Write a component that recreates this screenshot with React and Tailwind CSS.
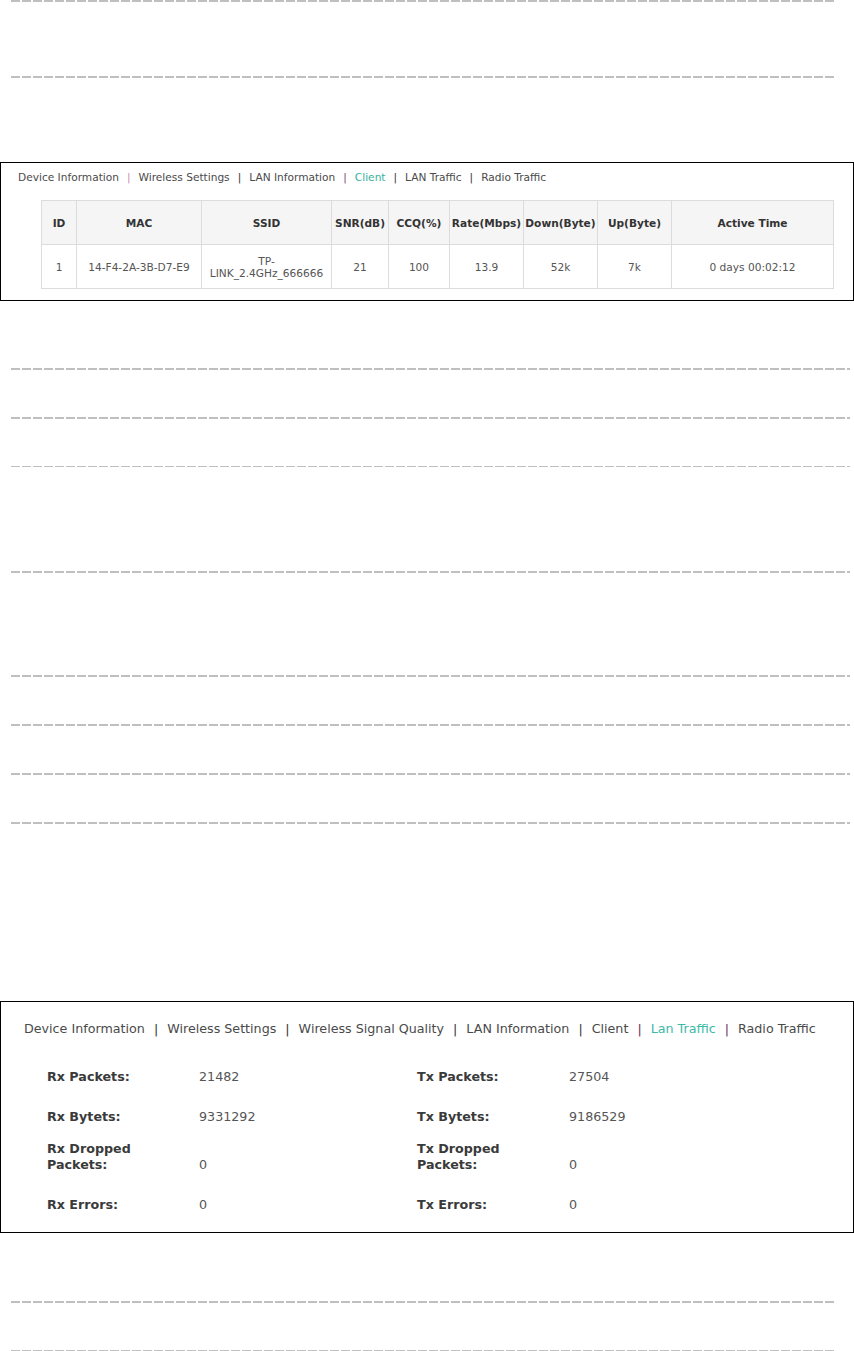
import React from 'react'

const dash = 'bg-[repeating-linear-gradient(90deg,#bfbfbf_0px,#bfbfbf_9px,transparent_9px,transparent_11px)]'

function Line({ mt, wide, thin }){
  return (
    <div
      className={
        dash + ' ml-[11px] ' +
        (wide ? 'w-[839px] ' : 'w-[823px] ') +
        (thin ? 'h-px ' : 'h-[2px] ') + mt
      }
    />
  )
}

const cols = [
  { h: 'ID', w: 'w-[35px]', v: '1' },
  { h: 'MAC', w: 'w-[125px]', v: '14-F4-2A-3B-D7-E9' },
  { h: 'SSID', w: 'w-[130px]', v: null },
  { h: 'SNR(dB)', w: 'w-[57px]', v: '21' },
  { h: 'CCQ(%)', w: 'w-[61px]', v: '100' },
  { h: 'Rate(Mbps)', w: 'w-[74px]', v: '13.9' },
  { h: 'Down(Byte)', w: 'w-[74px]', v: '52k' },
  { h: 'Up(Byte)', w: 'w-[74px]', v: '7k' },
  { h: 'Active Time', w: 'w-[162px]', v: '0 days 00:02:12' },
]

function ClientBox(){
  return (
    <div className="mt-[84px] border border-black h-[139px] text-[10.6px] leading-[14px]">
      <div className="pt-[7px] pl-[17px] text-[#4a4a4a] flex whitespace-nowrap">
        <span>Device Information</span>
        <span className="mx-[8px] text-[#c98ab0]">|</span>
        <span>Wireless Settings</span>
        <span className="mx-[8px] text-[#333]">|</span>
        <span>LAN Information</span>
        <span className="mx-[8px] text-[#7a3a6d]">|</span>
        <span className="text-[#35b29e]">Client</span>
        <span className="mx-[8px] text-[#333]">|</span>
        <span>LAN Traffic</span>
        <span className="mx-[8px] text-[#333]">|</span>
        <span>Radio Traffic</span>
      </div>
      <table className="mt-[16px] ml-[40px] w-[792px] border-collapse table-fixed">
        <thead>
          <tr className="h-[44px] bg-[#f5f5f5]">
            {cols.map(c => (
              <th key={c.h} className={c.w + ' border border-[#dcdcdc] font-bold text-[#333] text-center p-0 whitespace-nowrap'}>{c.h}</th>
            ))}
          </tr>
        </thead>
        <tbody>
          <tr className="h-[44px]">
            {cols.map(c => (
              <td key={c.h} className="border border-[#dcdcdc] text-[#555] text-center p-0 leading-[12px] whitespace-nowrap">
                {c.v ?? <>TP-<br />LINK_2.4GHz_666666</>}
              </td>
            ))}
          </tr>
        </tbody>
      </table>
    </div>
  )
}

function Stat({ label, value, two }){
  return (
    <>
      <div className="font-bold text-[#3a3a3a]">{label}{two && <><br />{two}</>}</div>
      <div className="text-[#555] self-end">{value}</div>
    </>
  )
}

function TrafficBox(){
  return (
    <div className="mt-[177px] border border-black h-[232px] text-[12.7px] leading-[16px]">
      <div className="pt-[19px] pl-[23px] text-[#4a4a4a] flex whitespace-nowrap">
        <span>Device Information</span>
        <span className="mx-[9px] text-[#333]">|</span>
        <span>Wireless Settings</span>
        <span className="mx-[9px] text-[#333]">|</span>
        <span>Wireless Signal Quality</span>
        <span className="mx-[9px] text-[#333]">|</span>
        <span>LAN Information</span>
        <span className="mx-[9px] text-[#333]">|</span>
        <span>Client</span>
        <span className="mx-[9px] text-[#6b2d5c]">|</span>
        <span className="text-[#3bbaa6]">Lan Traffic</span>
        <span className="mx-[9px] text-[#6b2d5c]">|</span>
        <span>Radio Traffic</span>
      </div>
      <div className="mt-[32px] ml-[46px] grid grid-cols-[152px_218px_152px_1fr] gap-y-[24px]">
        <Stat label="Rx Packets:" value="21482" />
        <Stat label="Tx Packets:" value="27504" />
        <Stat label="Rx Bytets:" value="9331292" />
        <Stat label="Tx Bytets:" value="9186529" />
        <div className="col-span-4 -mt-[8px] grid grid-cols-[152px_218px_152px_1fr]">
          <Stat label="Rx Dropped" two="Packets:" value="0" />
          <Stat label="Tx Dropped" two="Packets:" value="0" />
        </div>
        <Stat label="Rx Errors:" value="0" />
        <Stat label="Tx Errors:" value="0" />
      </div>
    </div>
  )
}

export default function App(){
  return (
    <div className="w-[854px] h-[1351px] bg-white overflow-hidden font-['DejaVu_Sans',sans-serif]">
      <Line mt="mt-0" />
      <Line mt="mt-[74px]" />
      <ClientBox />
      <Line mt="mt-[67px]" wide />
      <Line mt="mt-[47px]" wide />
      <Line mt="mt-[47px]" wide thin />
      <Line mt="mt-[104px]" wide />
      <Line mt="mt-[102px]" wide />
      <Line mt="mt-[47px]" wide />
      <Line mt="mt-[47px]" wide />
      <Line mt="mt-[47px]" wide />
      <TrafficBox />
      <Line mt="mt-[68px]" />
      <Line mt="mt-[47px]" />
    </div>
  )
}
